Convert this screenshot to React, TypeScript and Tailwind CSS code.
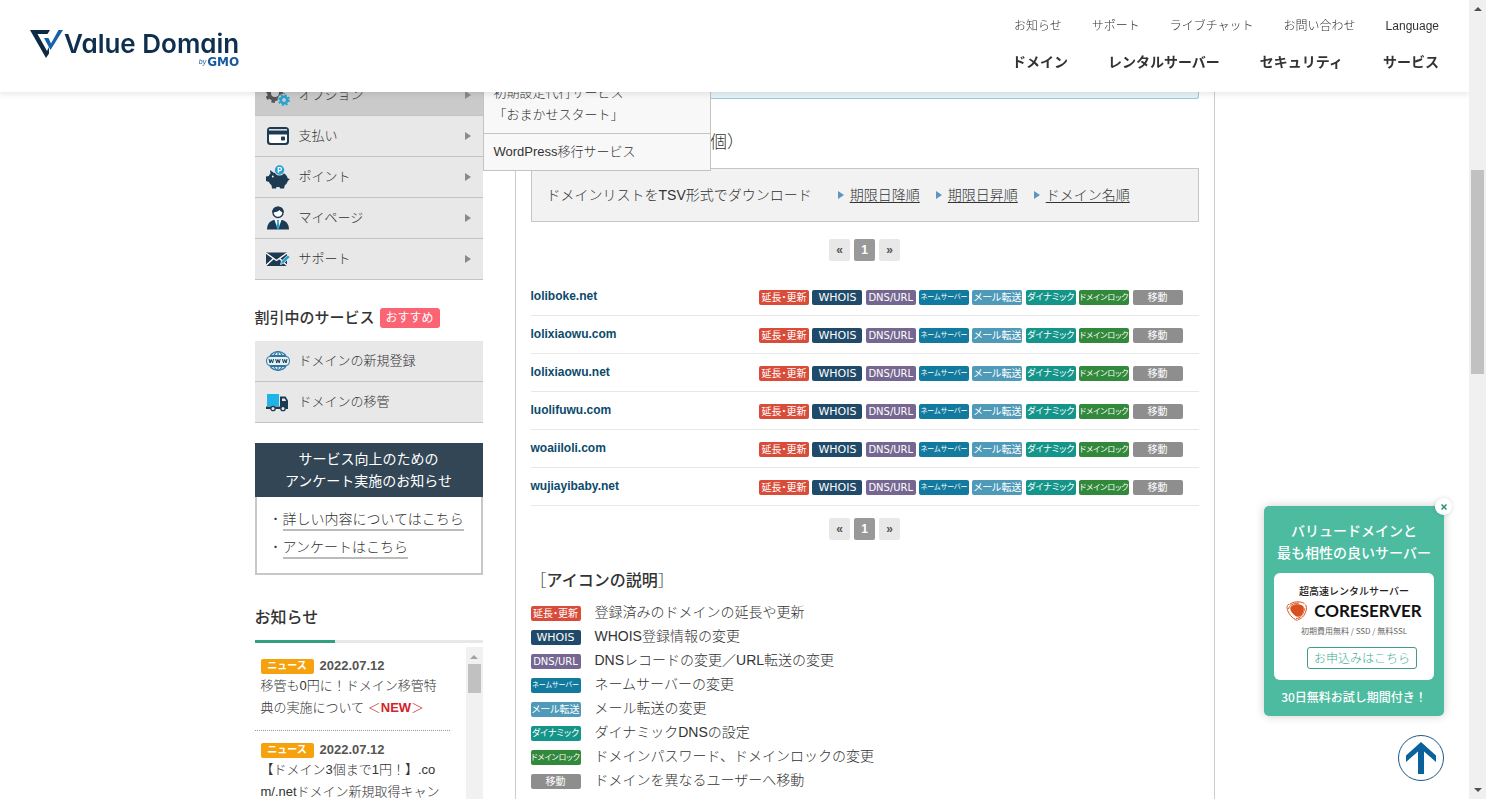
import * as React from "react";
import clsx from "clsx";

type IconProps = { className?: string };

function GearIcon({ className }: IconProps) {
  return (
    <svg viewBox="0 0 24 24" className={className} aria-hidden>
      <circle cx="9" cy="10" r="6" fill="none" stroke="#555" strokeWidth="4" />
      <circle cx="9" cy="10" r="8.5" fill="none" stroke="#555" strokeWidth="3" strokeDasharray="3.4 3.27" />
      <circle cx="18" cy="17" r="6.4" fill="#ccc" />
      <circle cx="18" cy="17" r="3.2" fill="none" stroke="#27a0d2" strokeWidth="2.6" />
      <circle cx="18" cy="17" r="5" fill="none" stroke="#27a0d2" strokeWidth="1.8" strokeDasharray="2 1.93" />
    </svg>
  );
}

function CardIcon({ className }: IconProps) {
  return (
    <svg viewBox="0 0 24 24" className={className} aria-hidden>
      <rect x="1" y="3" width="22" height="18" rx="3.500" fill="#1c3a52" />
      <rect x="3" y="5.200" width="18" height="1.300" fill="#fff" />
      <path d="M3 10.500h18v6.500a2 2 0 0 1-2 2H5a2 2 0 0 1-2-2z" fill="#fff" />
      <rect x="15" y="12.500" width="4" height="4" rx="0.8" fill="#1c3a52" />
    </svg>
  );
}

function PigIcon({ className }: IconProps) {
  return (
    <svg viewBox="0 0 24 24" className={className} aria-hidden>
      <path
        d="M4 5l4 3c1.500-.8 3-1 5-1 5 0 8 3 8.800 6.500l2.200.5-2.200 2c-.5 2-1.600 3.300-3 4.300L18 23.500h-4l-.5-1.500h-3L10 23.500H6L5.500 20.300C4.400 19.500 3.500 18.200 3 17L0 16v-4.500l2.800-.5c.3-1 .8-1.700 1.700-2.500z"
        fill="#1c3a52"
      />
      <circle cx="6.800" cy="11.500" r="0.9" fill="#fff" />
      <circle cx="13.500" cy="5" r="5.500" fill="#e8e8e8" />
      <circle cx="13.500" cy="5" r="4.700" fill="#27a0d2" />
      <path d="M12.300 7.800V2.600h1.700a1.500 1.500 0 0 1 0 3h-1.700" fill="none" stroke="#fff" strokeWidth="1.200" />
    </svg>
  );
}

function PersonIcon({ className }: IconProps) {
  return (
    <svg viewBox="0 0 24 24" className={className} aria-hidden>
      <circle cx="12" cy="6.500" r="5" fill="#fff" stroke="#1c3a52" strokeWidth="1.400" />
      <path d="M6.300 6.500C6 2.500 9 .5 12 .5s6 2 5.700 6c-2-.2-3.200-1-4-2.500-1.500 1.500-4 2.500-7.400 2.500z" fill="#1c3a52" />
      <path d="M1 23.500c.3-5 2-8 6.500-9.500h9c4.500 1.500 6.200 4.500 6.500 9.500z" fill="#1c3a52" />
      <path d="M8.300 13.500L12 23.500l3.700-10z" fill="#fff" />
      <path d="M10.700 14h2.600l-.6 2 .9 5-1.600 2.500-1.600-2.500.9-5z" fill="#27a0d2" />
    </svg>
  );
}

function MailIcon({ className }: IconProps) {
  return (
    <svg viewBox="0 0 24 24" className={className} aria-hidden>
      <rect x="0" y="5.500" width="21" height="13.500" fill="#1c3a52" />
      <path d="M0 6l10.500 7.500L21 6M0 18.500l7.500-7M21 18.500L13.500 11.500" fill="none" stroke="#fff" strokeWidth="1.400" />
      <path d="M14.500 17.500l1-3.500 6.500-6 2 2.300-6.500 6z" fill="#27a0d2" stroke="#e8e8e8" strokeWidth="0.8" />
    </svg>
  );
}

function WwwIcon({ className }: IconProps) {
  return (
    <svg viewBox="0 0 24 24" className={className} aria-hidden>
      <g fill="none" stroke="#2b78a5" strokeWidth="1.200">
        <circle cx="12" cy="12" r="9.500" />
        <ellipse cx="12" cy="12" rx="4.800" ry="9.500" />
        <path d="M12 2.500v19M4.500 6.500h15M4.500 17.500h15" />
      </g>
      <rect x="0.600" y="7.500" width="22.800" height="9" rx="3.500" fill="#e4f2f8" stroke="#2b78a5" strokeWidth="1" />
      <path
        d="M3 10l1 4 1.200-3.500L6.500 14l1-4M9.700 10l1 4 1.200-3.500 1.300 3.500 1-4M16.500 10l1 4 1.200-3.500L20 14l1-4"
        fill="none"
        stroke="#1c3a52"
        strokeWidth="1"
      />
    </svg>
  );
}

function TruckIcon({ className }: IconProps) {
  return (
    <svg viewBox="0 0 24 24" className={className} aria-hidden>
      <rect x="1" y="4" width="12" height="12" fill="#1fb3e8" />
      <path d="M14 6.500h5.500L22 10.500V19h-8z" fill="#1c3a52" />
      <path d="M16 8.500h2.800l1.300 2.500H16z" fill="#e8e8e8" />
      <path d="M0 16.500h22V19H0z" fill="#1c3a52" />
      <circle cx="7" cy="18.500" r="2.200" fill="#e8e8e8" stroke="#1c3a52" strokeWidth="1.300" />
      <circle cx="17" cy="18.500" r="2.200" fill="#e8e8e8" stroke="#1c3a52" strokeWidth="1.300" />
    </svg>
  );
}

function Triangle({ className }: IconProps) {
  return (
    <svg viewBox="0 0 6 8" className={className} aria-hidden>
      <path d="M0 0l6 4-6 4z" fill="currentColor" />
    </svg>
  );
}

const subNav = ["お知らせ", "サポート", "ライブチャット", "お問い合わせ", "Language"];
const mainNav = ["ドメイン", "レンタルサーバー", "セキュリティ", "サービス"];

const sideMenu = [
  { label: "支払い", Icon: CardIcon },
  { label: "ポイント", Icon: PigIcon },
  { label: "マイページ", Icon: PersonIcon },
  { label: "サポート", Icon: MailIcon },
];

const campaignMenu = [
  { label: "ドメインの新規登録", Icon: WwwIcon },
  { label: "ドメインの移管", Icon: TruckIcon },
];

const actions = [
  { label: "延長・更新", color: "bg-[#d94c3a]", text: "text-[10px]", desc: "登録済みのドメインの延長や更新" },
  { label: "WHOIS", color: "bg-[#1f4a69]", text: "text-[11px]", desc: "WHOIS登録情報の変更" },
  { label: "DNS/URL", color: "bg-[#756791]", text: "text-[10px]", desc: "DNSレコードの変更／URL転送の変更" },
  { label: "ネームサーバー", color: "bg-[#127a9e]", text: "text-[7px]", desc: "ネームサーバーの変更" },
  { label: "メール転送", color: "bg-[#4f9ab8]", text: "text-[10px]", desc: "メール転送の変更" },
  { label: "ダイナミック", color: "bg-[#15958a]", text: "text-[9px]", desc: "ダイナミックDNSの設定" },
  { label: "ドメインロック", color: "bg-[#32883b]", text: "text-[8px]", desc: "ドメインパスワード、ドメインロックの変更" },
  { label: "移動", color: "bg-[#8e8e8e]", text: "text-[10px]", desc: "ドメインを異なるユーザーへ移動" },
];

const domains = ["loliboke.net", "lolixiaowu.com", "lolixiaowu.net", "luolifuwu.com", "woaiiloli.com", "wujiayibaby.net"];

type Action = (typeof actions)[number];

function ActionLabel({ action }: { action: Action }) {
  return (
    <span
      className={clsx(
        "inline-flex h-[15px] w-[50px] items-center justify-center rounded-[2px] align-middle font-['DejaVu_Sans','Noto_Sans_CJK_JP',sans-serif] leading-[15px] font-normal whitespace-nowrap text-white [font-feature-settings:'palt']",
        action.color,
        action.text,
      )}
    >
      {action.label}
    </span>
  );
}

function Logo() {
  return (
    <a href="#" aria-label="Value Domain by GMO" className="flex items-start gap-px text-[#0f2f4f]">
      <svg viewBox="0 0 33 28" className="h-7 w-[33px]" aria-hidden>
        <path d="M0 0h20l-2.500 4H7.500l9.500 17 2-4 0 6.500L16 28z" fill="#0c2a45" />
        <path d="M14 8h4.500l2.500 5.500L28.500 0H33L20.500 20z" fill="#1560a8" />
      </svg>
      <span className="flex flex-col items-end">
        <span className="font-['Inter',sans-serif] text-[26px] leading-7 font-semibold [font-feature-settings:'cv11']">
          Value Domain
        </span>
        <span className="flex items-center gap-px text-[7px] leading-2 text-[#17599a] italic">
          by
          <span className="font-['DejaVu_Sans',sans-serif] text-xs leading-2 font-bold not-italic">GMO</span>
        </span>
      </span>
    </a>
  );
}

function Header() {
  return (
    <header className="sticky top-0 z-20 flex h-[92px] justify-between bg-white pr-[30px] pl-[30px] shadow-[0_2px_6px_rgba(0,0,0,0.1)]">
      <div className="pt-[30px]">
        <Logo />
      </div>
      <div className="flex flex-col items-end gap-3.5 pt-4">
        <nav aria-label="サブメニュー" className="flex gap-[30px] text-xs leading-5">
          {subNav.map((label) => (
            <a key={label} href="#">
              {label}
            </a>
          ))}
        </nav>
        <nav aria-label="メインメニュー" className="flex gap-10 text-sm leading-6 font-bold">
          {mainNav.map((label) => (
            <a key={label} href="#">
              {label}
            </a>
          ))}
        </nav>
      </div>
    </header>
  );
}

function MenuLink({ label, Icon, arrow }: { label: string; Icon: React.FC<IconProps>; arrow?: boolean }) {
  return (
    <a href="#" className="flex h-[41px] items-center gap-[9px] border-b border-[#c3c3c3] pr-3 pl-[11px]">
      <Icon className="size-6" />
      <span className="flex-1">{label}</span>
      {arrow && <Triangle className="h-2 w-1.5 text-[#8a8a8a]" />}
    </a>
  );
}

function NewsItem({ children }: { children: React.ReactNode }) {
  return (
    <li className="border-b border-dotted border-[#999] pt-2.5 pb-[11px] pl-1.5">
      <div className="flex h-[18px] items-center gap-1.5">
        <span className="flex h-[15px] w-[53px] items-center justify-center rounded-[2px] bg-[#f5a20e] text-[10px] font-bold text-white">
          ニュース
        </span>
        <time dateTime="2022-07-12" className="font-bold text-[#555]">
          2022.07.12
        </time>
      </div>
      <p className="leading-[22px] break-all">{children}</p>
    </li>
  );
}

function Sidebar() {
  return (
    <aside className="w-[228px] shrink-0 text-[13px] leading-[22px]">
      <ul className="bg-[#e8e8e8]">
        <li className="relative bg-[#cacaca]">
          <MenuLink label="オプション" Icon={GearIcon} arrow />
          <ul className="absolute top-0 left-full z-10 w-[228px] border-x border-[#c3c3c3] bg-[#f8f8f8]">
            <li className="border-b border-[#c3c3c3]">
              <a href="#" className="block px-2.5 py-[7px]">
                初期設定代行サービス
                <br />
                「おまかせスタート」
              </a>
            </li>
            <li className="border-b border-[#c3c3c3]">
              <a href="#" className="block px-2.5 py-[7px]">
                WordPress移行サービス
              </a>
            </li>
          </ul>
        </li>
        {sideMenu.map((item) => (
          <li key={item.label}>
            <MenuLink {...item} arrow />
          </li>
        ))}
      </ul>

      <h2 className="mt-[27px] flex items-center gap-[5px] text-[15px] font-medium">
        割引中のサービス
        <span className="flex h-5 w-[60px] items-center justify-center rounded-[3px] bg-[#fb6473] text-xs font-normal text-white">
          おすすめ
        </span>
      </h2>
      <ul className="mt-3 bg-[#e8e8e8]">
        {campaignMenu.map((item) => (
          <li key={item.label}>
            <MenuLink {...item} />
          </li>
        ))}
      </ul>

      <section className="mt-5">
        <h2 className="bg-[#324656] py-[5px] text-center text-sm leading-[22px] font-normal text-white">
          サービス向上のための
          <br />
          アンケート実施のお知らせ
        </h2>
        <ul className="border-2 border-t-0 border-[#c8c8c8] pt-[9px] pb-[11px] pl-3 text-sm">
          {["詳しい内容についてはこちら", "アンケートはこちら"].map((label) => (
            <li key={label} className="flex h-7 items-center">
              <span className="w-3.5 text-center text-xs">・</span>
              <a href="#" className="border-b-2 border-[#bbb] leading-5">
                {label}
              </a>
            </li>
          ))}
        </ul>
      </section>

      <h2 className="mt-8 text-[16px] leading-[22px] font-medium">お知らせ</h2>
      <div className="mt-[11px] h-[3px] bg-[#e8e8e8]">
        <div className="h-full w-20 bg-[#31a081]" />
      </div>
      <div className="mt-1 flex h-[300px] overflow-hidden">
        <ul className="w-[195px]">
          <NewsItem>
            移管も0円に！ドメイン移管特典の実施について{" "}
            <span className="text-[#d1232a]">
              ＜<b className="font-bold">NEW</b>＞
            </span>
          </NewsItem>
          <NewsItem>【ドメイン3個まで1円！】.com/.netドメイン新規取得キャンペーン</NewsItem>
        </ul>
        <div className="ml-auto flex w-[17px] flex-col items-center bg-[#f1f1f1] pt-2">
          <svg viewBox="0 0 8 4" className="h-1 w-2" aria-hidden>
            <path d="M0 4l4-4 4 4z" fill="#a3a3a3" />
          </svg>
          <div className="mt-[5px] h-[29px] w-[13px] bg-[#c1c1c1]" />
        </div>
      </div>
    </aside>
  );
}

function Pagination() {
  return (
    <nav aria-label="ページ送り" className="flex justify-center gap-1 text-xs font-bold">
      <a href="#" className="flex h-[22px] w-[21px] items-center justify-center rounded-[2px] bg-[#e8e8e8] text-[#555]">
        «
      </a>
      <span
        aria-current="page"
        className="flex h-[22px] w-[21px] items-center justify-center rounded-[2px] bg-[#999] text-white"
      >
        1
      </span>
      <a href="#" className="flex h-[22px] w-[21px] items-center justify-center rounded-[2px] bg-[#e8e8e8] text-[#555]">
        »
      </a>
    </nav>
  );
}

function DomainTable() {
  return (
    <table className="mt-4 w-full text-xs">
      <tbody>
        {domains.map((domain) => (
          <tr key={domain} className="h-[38px] border-b border-[#e8e8e8]">
            <th scope="row" className="text-left font-bold text-[#0b4a6b]">
              <a href="#">{domain}</a>
            </th>
            <td className="pt-0.5 pr-4 text-right whitespace-nowrap">
              {actions.map((action) => (
                <React.Fragment key={action.label}>
                  <a href="#">
                    <ActionLabel action={action} />
                  </a>{" "}
                </React.Fragment>
              ))}
            </td>
          </tr>
        ))}
      </tbody>
    </table>
  );
}

function Main() {
  return (
    <main className="ml-8 min-w-0 flex-1 border-x border-[#ccc] px-[15px]">
      <div className="h-6 rounded-b-[3px] border border-t-0 border-[#9cc8d6] bg-[#e6f3f6]" />
      <h1 className="mt-8 text-[17px] leading-6">登録中ドメイン一覧（6個）</h1>

      <div className="mt-[13px] flex h-[54px] items-center border border-[#c6c6c6] bg-[#f2f2f2] px-[15px] text-sm">
        ドメインリストをTSV形式でダウンロード
        <ul className="ml-[26px] flex gap-4">
          {["期限日降順", "期限日昇順", "ドメイン名順"].map((label) => (
            <li key={label} className="flex items-center gap-1.5">
              <Triangle className="h-2 w-1.5 text-[#5a96bd]" />
              <a href="#" className="underline underline-offset-2">
                {label}
              </a>
            </li>
          ))}
        </ul>
      </div>

      <div className="mt-[17px]">
        <Pagination />
      </div>
      <DomainTable />
      <div className="mt-3">
        <Pagination />
      </div>

      <h2 className="mt-[29px] text-[16px] leading-6 font-medium">
        <span className="font-light">［</span>アイコンの説明<span className="font-light">］</span>
      </h2>
      <dl className="mt-[7px] text-sm leading-6">
        {actions.map((action) => (
          <div key={action.label} className="flex h-6 items-center gap-3.5">
            <dt className="flex pt-1">
              <ActionLabel action={action} />
            </dt>
            <dd>{action.desc}</dd>
          </div>
        ))}
      </dl>
    </main>
  );
}

function ServerBanner() {
  return (
    <aside className="relative w-[180px] rounded-[5px] bg-[#4cbb9f] px-2.5 pt-[13px] pb-[7px] text-center font-['Noto_Sans_CJK_JP',sans-serif] shadow-[0_0_10px_rgba(0,0,0,0.2)]">
      <button
        type="button"
        aria-label="閉じる"
        className="absolute -top-2 -right-2 flex size-[17px] items-center justify-center rounded-full bg-white shadow-[0_0_4px_rgba(0,0,0,0.15)]"
      >
        <svg viewBox="0 0 6 6" className="size-1.5" aria-hidden>
          <path d="M0.500 0.500l5 5M5.500 0.500l-5 5" stroke="#2a8f78" strokeWidth="1.500" />
        </svg>
      </button>
      <p className="text-sm leading-[22px] font-medium whitespace-nowrap text-white">
        バリュードメインと
        <br />
        最も相性の良いサーバー
      </p>
      <div className="mt-2.5 flex h-[107px] flex-col items-center rounded-md bg-white pt-2.5">
        <p className="text-[10px] leading-4 font-medium text-[#222]">超高速レンタルサーバー</p>
        <div className="flex items-center gap-1.5 leading-6">
          <svg viewBox="0 0 22 22" className="size-[22px]" aria-hidden>
            <path
              d="M6.500 5.500C9.500 3.800 14.500 4 17 6c1.800 1.600.5 6.500-1.500 9-1.500 1.900-3.600 2.300-5.500 1.200C7 14.500 4 10.500 4.300 8.200c.1-1.200 1-2 2.200-2.700z"
              fill="#d9501e"
            />
            <g fill="none" stroke="#d9501e" strokeWidth="1">
              <path d="M3.500 4.500C7.500 1.200 14 1 18.500 3.500" />
              <path d="M19.500 4.500c2 3.500.5 9-3 12.500-1.500 1.400-3 2.200-4.500 2.600" />
              <path d="M11.500 20.500C6.500 19 1.500 13 1 7.500c0-1.500.7-2.500 2-3.500" />
              <path d="M2.500 9C3 5.500 7.500 3 13 3.200" />
              <path d="M10 18.500c4 .3 8-4.500 8.500-10" />
            </g>
          </svg>
          <span className="font-['Lato',sans-serif] text-[17px] font-bold text-[#111]">CORESERVER</span>
        </div>
        <p className="text-[8px] leading-4 font-normal text-[#666]">初期費用無料 / SSD / 無料SSL</p>
        <a
          href="#"
          className="mt-2 mr-[17px] flex h-[22px] w-[110px] shrink-0 items-center justify-center self-end rounded-[3px] border border-[#3f9c88] text-xs whitespace-nowrap text-[#3bab91]"
        >
          お申込みはこちら
        </a>
      </div>
      <p className="mt-[5px] text-xs leading-6 font-medium whitespace-nowrap text-white">30日無料お試し期間付き！</p>
    </aside>
  );
}

function WindowScrollbar() {
  return (
    <div className="flex w-[17px] shrink-0 flex-col items-center bg-[#f0f0f0] py-[7px]">
      <svg viewBox="0 0 8 4" className="h-1 w-2" aria-hidden>
        <path d="M0 4l4-4 4 4z" fill="#505050" />
      </svg>
      <div className="mt-[159px] h-[204px] w-[13px] bg-[#c1c1c1]" />
      <svg viewBox="0 0 8 4" className="mt-auto h-1 w-2" aria-hidden>
        <path d="M0 0l4 4 4-4z" fill="#505050" />
      </svg>
    </div>
  );
}

export default function App() {
  return (
    <div
      lang="ja"
      className="flex h-screen overflow-hidden bg-white font-['Liberation_Sans','Noto_Sans_CJK_JP',sans-serif] font-light text-[#333]"
    >
      <div className="relative min-w-0 flex-1 overflow-hidden">
        <Header />
        <div className="mx-auto -mt-[17px] flex max-w-[960px]">
          <Sidebar />
          <Main />
        </div>

        <div className="absolute right-[25px] bottom-[18px] z-10 flex flex-col items-end gap-[19px]">
          <ServerBanner />
          <a
            href="#"
            aria-label="ページの先頭へ"
            className="flex size-[46px] items-center justify-center rounded-full border border-[#1c5a88] bg-white"
          >
            <svg viewBox="0 0 30 32" className="h-8 w-[30px]" aria-hidden>
              <path d="M15 0l15 13.500v6.500L18 9.500V32h-6V9.500L0 20v-6.500z" fill="#0a629c" />
            </svg>
          </a>
        </div>
      </div>
      <WindowScrollbar />
    </div>
  );
}
